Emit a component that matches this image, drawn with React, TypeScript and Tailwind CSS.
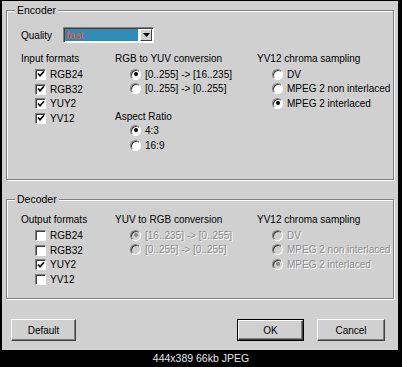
import React from "react";

const FONT = { fontFamily: '"Liberation Sans", Arial, sans-serif' };

function Check({ checked }: { checked: boolean }) {
  return (
    <span className="flex h-[11px] w-[11px] shrink-0 items-center justify-center border border-t-[#808080] border-l-[#808080] border-r-white border-b-white bg-white shadow-[inset_1px_1px_0_#404040]">
      {checked && (
        <svg width="8" height="8" viewBox="0 0 8 8">
          <polyline points="1,3.5 3,5.8 7,1.2" fill="none" stroke="#000" strokeWidth="1.7" />
        </svg>
      )}
    </span>
  );
}

function Radio({ checked, disabled }: { checked?: boolean; disabled?: boolean }) {
  return (
    <span
      className={
        "flex h-[11px] w-[11px] shrink-0 items-center justify-center rounded-full border border-t-[#808080] border-l-[#808080] border-r-white border-b-white shadow-[inset_1px_1px_0_#404040] " +
        (disabled ? "bg-[#d0d0d0]" : "bg-white")
      }
    >
      {checked && <span className={"h-[4px] w-[4px] rounded-full " + (disabled ? "bg-[#8a8a8a]" : "bg-black")} />}
    </span>
  );
}

function Label({ children, disabled }: { children: React.ReactNode; disabled?: boolean }) {
  return (
    <span
      className={
        "block whitespace-nowrap text-[10px] leading-[13px] " +
        (disabled ? "text-[#8c8c8c] [text-shadow:1px_1px_0_#fff]" : "text-black")
      }
    >
      {children}
    </span>
  );
}

function CheckRow({ label, checked }: { label: string; checked: boolean }) {
  return (
    <div className="flex h-[14.7px] items-center gap-[4px] pl-[14px]">
      <Check checked={checked} />
      <Label>{label}</Label>
    </div>
  );
}

function RadioRow({ label, checked, disabled }: { label: string; checked?: boolean; disabled?: boolean }) {
  return (
    <div className="flex h-[14.6px] items-center gap-[4px] pl-[15px]">
      <Radio checked={checked} disabled={disabled} />
      <Label disabled={disabled}>{label}</Label>
    </div>
  );
}

function Header({ children }: { children: React.ReactNode }) {
  return (
    <div className="h-[15px] leading-[13px]">
      <Label>{children}</Label>
    </div>
  );
}

function Group({ title, className, children }: { title: string; className: string; children: React.ReactNode }) {
  return (
    <div
      className={
        "relative w-[388px] border border-[#808080] shadow-[inset_1px_1px_0_#fff,1px_1px_0_#fff] " + className
      }
    >
      <span className="absolute left-[8px] top-[-7px] bg-[#d0d0d0] px-[2px] text-[10.5px] leading-[13px] text-black">
        {title}
      </span>
      {children}
    </div>
  );
}

function Button({ label, isDefault, className }: { label: string; isDefault?: boolean; className: string }) {
  return (
    <div className={"h-[22px] " + (isDefault ? "border border-black " : "") + className}>
      <div className="flex h-full w-full items-center justify-center border border-t-white border-l-white border-r-[#404040] border-b-[#404040] bg-[#d0d0d0] shadow-[inset_-1px_-1px_0_#808080]">
        <Label>{label}</Label>
      </div>
    </div>
  );
}

export default function App() {
  return (
    <div className="flex h-[367px] w-[402px] flex-col bg-black leading-[13px]" style={FONT}>
      <div className="ml-[2px] mt-[1px] flex h-[349px] w-[396px] flex-col bg-[#d0d0d0] pl-[4px] pt-[9px]">
        <Group title="Encoder" className="h-[170px]">
          <div className="mt-[16px] flex h-[16px] items-center pl-[14px]">
            <div className="w-[42px]">
              <Label>Quality</Label>
            </div>
            <div className="flex h-[16px] w-[91px] border border-t-[#808080] border-l-[#808080] border-r-white border-b-white bg-white p-[1px] shadow-[inset_1px_1px_0_#404040]">
              <div className="flex flex-1 items-center bg-[#2f8db5] pl-[1px] text-[11px] leading-[12px] text-[#ff4a2a]">
                fast
              </div>
              <div className="ml-[2px] flex w-[12px] items-center justify-center border border-t-white border-l-white border-r-[#404040] border-b-[#404040] bg-[#d0d0d0]">
                <svg width="7" height="4" viewBox="0 0 7 4">
                  <polygon points="0,0 7,0 3.5,4" fill="#000" />
                </svg>
              </div>
            </div>
          </div>
          <div className="mt-[9px] flex pl-[14px]">
            <div className="w-[94px]">
              <Header>Input formats</Header>
              <CheckRow label="RGB24" checked />
              <CheckRow label="RGB32" checked />
              <CheckRow label="YUY2" checked />
              <CheckRow label="YV12" checked />
            </div>
            <div className="w-[142px]">
              <Header>RGB to YUV conversion</Header>
              <RadioRow label="[0..255] -> [16..235]" checked />
              <RadioRow label="[0..255] -> [0..255]" />
              <div className="mt-[14px] h-[13px]">
                <Label>Aspect Ratio</Label>
              </div>
              <RadioRow label="4:3" checked />
              <RadioRow label="16:9" />
            </div>
            <div>
              <Header>YV12 chroma sampling</Header>
              <RadioRow label="DV" />
              <RadioRow label="MPEG 2 non interlaced" />
              <RadioRow label="MPEG 2 interlaced" checked />
            </div>
          </div>
        </Group>

        <Group title="Decoder" className="mt-[19px] h-[100px]">
          <div className="mt-[13px] flex pl-[14px]">
            <div className="w-[94px]">
              <Header>Output formats</Header>
              <CheckRow label="RGB24" checked={false} />
              <CheckRow label="RGB32" checked={false} />
              <CheckRow label="YUY2" checked />
              <CheckRow label="YV12" checked={false} />
            </div>
            <div className="w-[142px]">
              <Header>YUV to RGB conversion</Header>
              <RadioRow label="[16..235] -> [0..255]" checked disabled />
              <RadioRow label="[0..255] -> [0..255]" disabled />
            </div>
            <div>
              <Header>YV12 chroma sampling</Header>
              <RadioRow label="DV" disabled />
              <RadioRow label="MPEG 2 non interlaced" disabled />
              <RadioRow label="MPEG 2 interlaced" checked disabled />
            </div>
          </div>
        </Group>

        <div className="mt-[20px] flex pr-[13px]">
          <Button label="Default" className="ml-[5px] w-[65px]" />
          <Button label="OK" isDefault className="ml-auto w-[67px]" />
          <Button label="Cancel" className="ml-[13px] w-[68px]" />
        </div>
      </div>
      <div className="flex h-[17px] items-center justify-center text-[10.5px] text-[#e8e8e8]">444x389 66kb JPEG</div>
    </div>
  );
}
